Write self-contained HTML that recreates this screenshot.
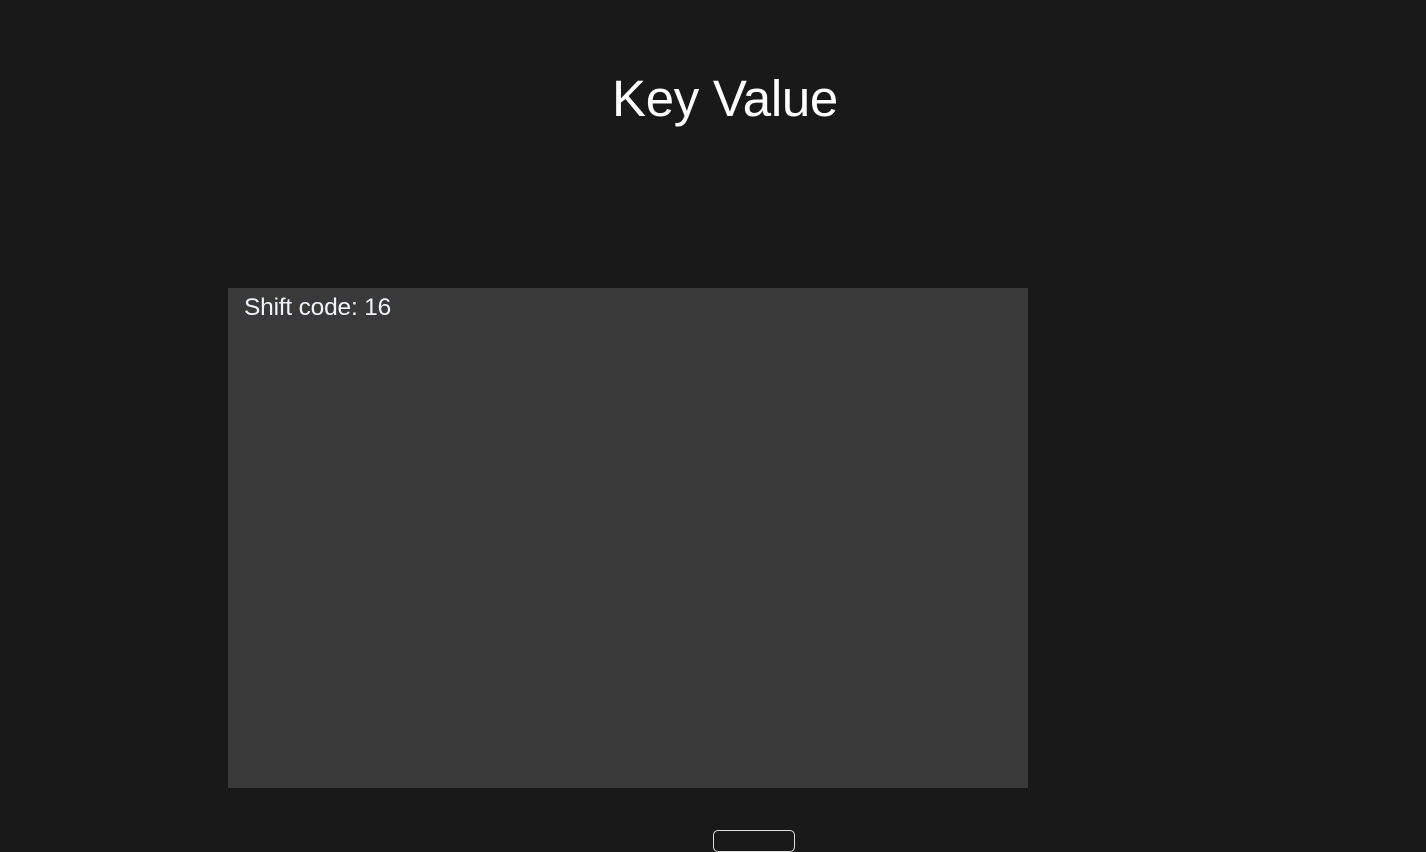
<!DOCTYPE html>
<html><head><style>
html,body{margin:0;padding:0;background:#191919;width:1426px;height:834px;overflow:hidden;font-family:"Liberation Sans",sans-serif;}
h1{position:absolute;left:0;width:1450px;top:68px;margin:0;text-align:center;font-weight:300;font-size:51px;line-height:62px;color:#fff;letter-spacing:-0.3px}
.box{position:absolute;left:228px;top:288px;width:800px;height:500px;background:#393939}
.box span{position:absolute;left:16px;top:6px;font-size:24.5px;color:#f0f4fa;letter-spacing:-0.2px}
.btn{position:absolute;left:713px;top:830px;width:80px;height:20px;border:1.5px solid #ddd;border-radius:5px}
</style></head><body>
<h1>Key Value</h1>
<div class="box"><span>Shift code: 16</span></div>
<div class="btn"></div>
</body></html>
